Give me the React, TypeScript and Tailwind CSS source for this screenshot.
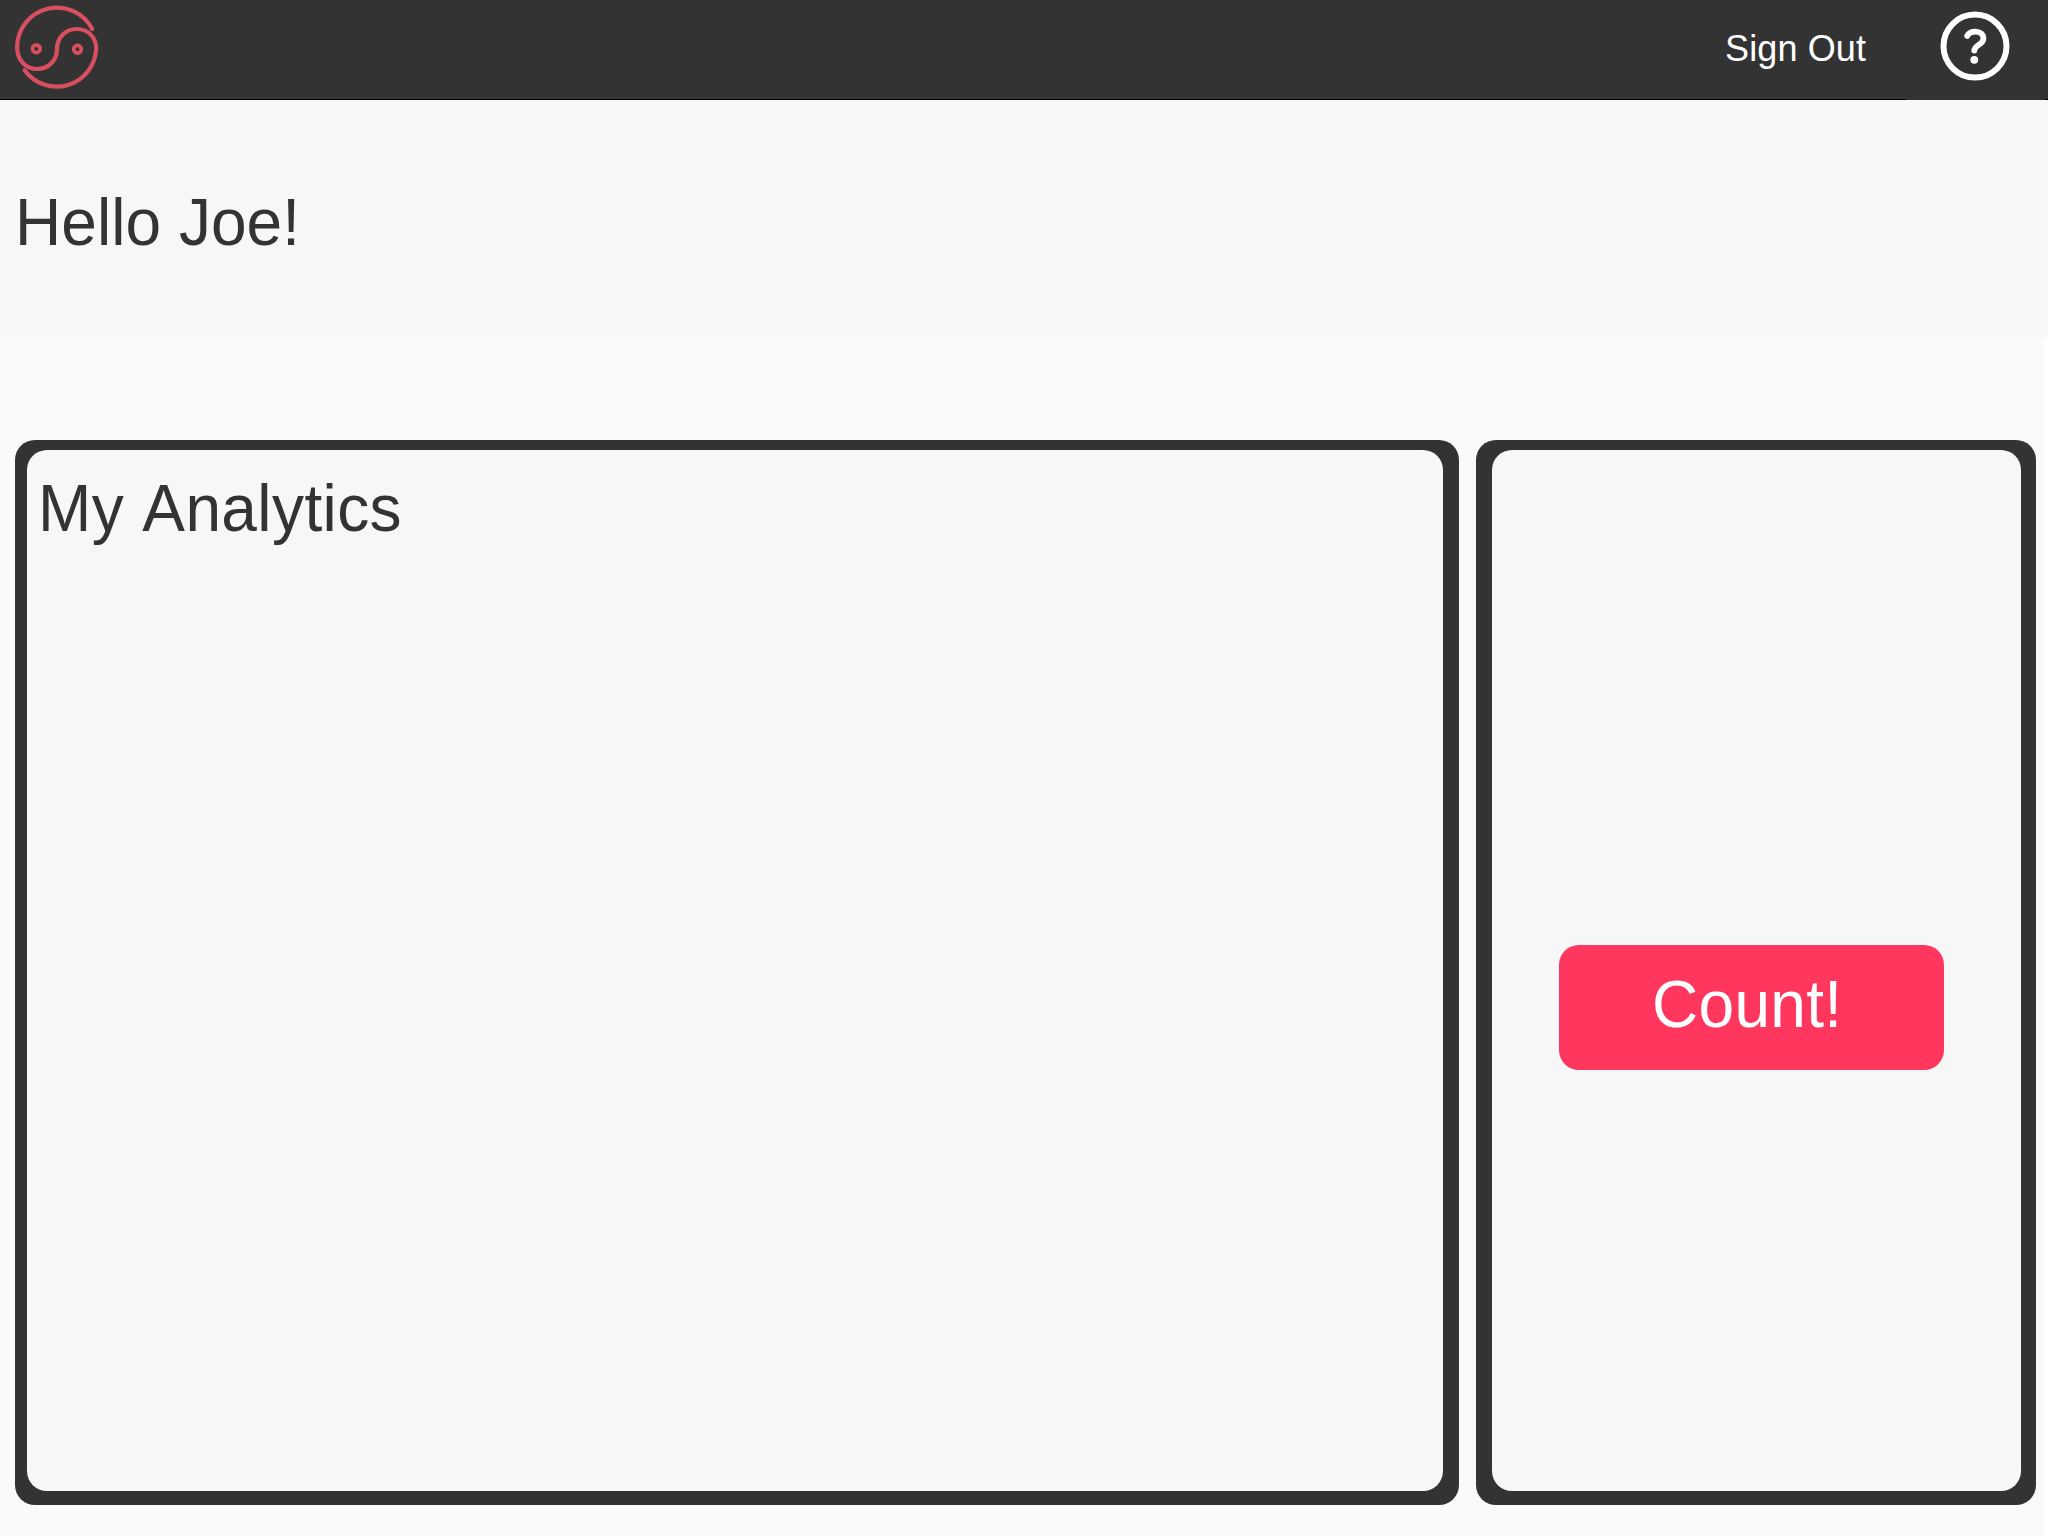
function Logo() {
  return (
    <svg
      className="ml-3 h-[99px] w-[90px] shrink-0"
      viewBox="12 0 90 99"
      fill="none"
      stroke="#d94f5f"
      strokeLinecap="round"
      strokeLinejoin="round"
      aria-label="Home"
    >
      <path
        strokeWidth="4.2"
        d="M92.2 29 A39.8 39.8 0 0 0 17.1 47 C17.1 60 25.5 69 37 69 C48.5 69 57 60.5 57 49 C57 37.5 65.5 29 77 29 C88 29 96.2 37.5 96.2 48.5 A39.6 39.6 0 0 1 24.6 70.3"
      />
      <circle cx="36.3" cy="48.8" r="3.8" strokeWidth="3.8" />
      <circle cx="77.5" cy="49.2" r="3.8" strokeWidth="3.8" />
    </svg>
  );
}

function HelpIcon() {
  return (
    <svg className="h-[100px] w-[139px]" viewBox="1906 0 139 100" fill="none" stroke="#fff" strokeLinecap="round">
      <circle cx="1975" cy="46.1" r="31.5" strokeWidth="6" />
      <path
        strokeWidth="5.8"
        d="M1967.2 35.9 C1968.6 33.1 1971.5 31.7 1975.3 31.7 C1980.2 31.7 1983.4 34.4 1983.4 38.4 C1983.4 45 1974.3 44.6 1974.3 50.6"
      />
      <circle cx="1974.3" cy="59.8" r="3.9" fill="#fff" stroke="none" />
    </svg>
  );
}

export default function App() {
  return (
    <div className="flex h-[1536px] w-[2048px] flex-col overflow-hidden bg-white font-['Liberation_Sans',Arial,sans-serif] text-[#333333] [font-kerning:none]">
      <header className="flex h-[100px] shrink-0 bg-[#333333]">
        <div className="flex flex-1 items-start justify-between border-b border-black">
          <Logo />
          <button className="mt-7 mr-10 origin-[0_33px] scale-y-[1.045] text-4xl leading-[42px] tracking-[0.1px] whitespace-nowrap text-white">
            Sign Out
          </button>
        </div>
        <button aria-label="Help">
          <HelpIcon />
        </button>
        <div className="w-[3px] border-b border-black" />
      </header>

      <section className="h-[237px] shrink-0 bg-[#f7f7f7] pt-[87px] pl-[15px]">
        <h1 className="origin-[0_58px] scale-y-[1.03] text-[64px] leading-[72px] tracking-[0.05px]">Hello Joe!</h1>
      </section>

      <main className="mr-1 flex flex-1 gap-[17px] bg-[#fafafa] pt-[103px] pr-2 pb-[31px] pl-[15px]">
        <section className="flex w-[1444px] rounded-[20px] bg-[#333333] pt-2.5 pr-4 pb-3.5 pl-3">
          <div className="flex-1 rounded-[20px] bg-[#f7f7f7] pt-[23px] pl-[11px]">
            <h2 className="origin-[0_58px] scale-y-[1.03] text-[64px] leading-[72px] tracking-[0.4px]">My Analytics</h2>
          </div>
        </section>
        <section className="flex flex-1 rounded-[20px] bg-[#333333] pt-2.5 pr-[15px] pb-3.5 pl-4">
          <div className="flex-1 rounded-[20px] bg-[#f7f7f7] pt-[495px] pl-[67px]">
            <button className="flex h-[125px] w-[385px] rounded-[20px] bg-[#ff365d] pt-6 pl-[93px] text-white">
              <span className="origin-[0_58px] scale-y-[1.03] text-[64px] leading-[72px] tracking-[0.3px]">Count!</span>
            </button>
          </div>
        </section>
      </main>
    </div>
  );
}
